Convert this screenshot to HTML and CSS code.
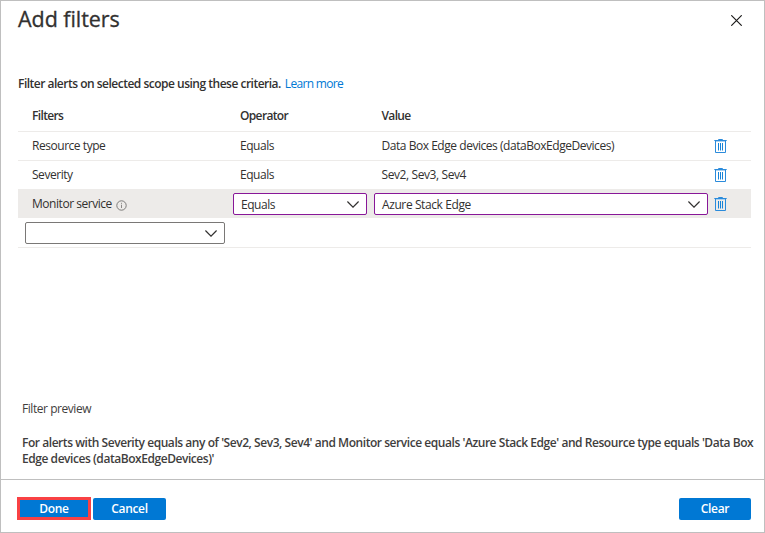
FILE: index.html
```html
<!DOCTYPE html>
<html lang="en">
<head>
<meta charset="utf-8">
<title>Add filters</title>
<link rel="stylesheet" href="styles.css">
</head>
<body>
<svg class="defs" width="0" height="0" aria-hidden="true">
  <symbol id="trash" viewBox="0 0 13 14">
    <path d="M.3 1.5H12.7M4.5 1.5V.5H8.5V1.5" fill="none" stroke="#2b8bdb"/>
    <path d="M1.5 2V13.5H11.5V2" fill="none" stroke="#2b8bdb"/><path d="M2 2.5H11" stroke="#a8d0f1"/>
    <path d="M4.5 4V11.5M6.5 4V11.5M8.5 4V11.5" fill="none" stroke="#1683d8"/>
  </symbol>
  <symbol id="chevron" viewBox="0 0 12 7">
    <path d="M.4.5 6 6.1 11.6.5" fill="none" stroke="#323130" stroke-width="1.2"/>
  </symbol>
</svg>
<main class="dialog">
  <header class="head">
    <h1>Add filters</h1>
    <svg class="close" viewBox="0 0 11 11"><path d="M.3.3 10.7 10.7M10.7.3.3 10.7" stroke="#1b1a19" stroke-width="1.15"/></svg>
  </header>
  <p class="lead"><span>Filter alerts on selected scope using these criteria.</span><a class="more">Learn more</a></p>
  <section class="table">
    <div class="row titles"><span>Filters</span><span>Operator</span><span>Value</span></div>
    <div class="row"><span>Resource type</span><span>Equals</span><span>Data Box Edge devices (dataBoxEdgeDevices)</span><svg class="trash"><use href="#trash"/></svg></div>
    <div class="row"><span>Severity</span><span>Equals</span><span class="levels">Sev2, Sev3, Sev4</span><svg class="trash"><use href="#trash"/></svg></div>
    <div class="row active">
      <div class="service"><span>Monitor service</span><svg class="info" viewBox="0 0 11 11"><circle cx="5.5" cy="5.5" r="4.7" fill="none" stroke="#706f6e" stroke-width=".9"/><path d="M5.5 4.7V8M5.5 2.8V3.8" stroke="#8a8886"/></svg></div>
      <div class="select"><span>Equals</span><svg class="chevron"><use href="#chevron"/></svg></div>
      <div class="select value"><span>Azure Stack Edge</span><svg class="chevron"><use href="#chevron"/></svg></div>
      <svg class="trash"><use href="#trash"/></svg>
    </div>
    <div class="row blank"><div class="select empty"><svg class="chevron"><use href="#chevron"/></svg></div></div>
  </section>
  <section class="preview">
    <h2>Filter preview</h2>
    <p>For alerts with Severity equals any of 'Sev2, Sev3, Sev4' and Monitor service equals 'Azure Stack Edge' and Resource type equals 'Data Box<br>Edge devices (dataBoxEdgeDevices)'</p>
  </section>
  <footer class="foot">
    <button class="done">Done</button><button>Cancel</button><button class="clear">Clear</button>
  </footer>
</main>
</body>
</html>
```
FILE: styles.css
```css
* { box-sizing: border-box; }
body { margin: 0; background: #fff; color: #323130; font: 12px/16px "Open Sans", "Noto Sans", sans-serif; }
.defs { position: absolute; }
.dialog { width: 765px; height: 533px; border: 1px solid #bfbfbf; display: flex; flex-direction: column; overflow: hidden; white-space: nowrap; }
h1, h2, p { margin: 0; font-weight: 400; }
.head { height: 75px; padding: 3px 22px 0 17px; display: flex; justify-content: space-between; align-items: flex-start; }
h1 { font-size: 21.5px; line-height: 30px; letter-spacing: -.05px; -webkit-text-stroke: .3px; }
.close { width: 11px; height: 11px; margin-top: 11px; }
.lead { height: 25px; padding: 0 0 0 17px; font-weight: 600; display: flex; gap: 4px; letter-spacing: -.5px; }
.more { color: #0078d4; font-weight: 400; letter-spacing: -.68px; }
.table { margin: 0 13px 0 17px; letter-spacing: -.46px; }
.row { display: grid; grid-template-columns: 208px 141.5px 332.5px 13px; align-items: center; height: 29px; padding-left: 14px; border-top: 1px solid #edebe9; }
.titles { height: 30px; border: 0; font-weight: 600; letter-spacing: -.65px; }
.levels { letter-spacing: -.4px; }
.active { background: #edebe9; grid-template-columns: 201px 134px 341px 19px; }
.active .value { margin-left: 7px; width: 334px; letter-spacing: -.4px; }
.active .trash { margin-left: 6px; }
.trash { width: 13px; height: 14px; display: block; }
.service { display: flex; align-items: center; gap: 4px; }
.info { width: 11px; height: 11px; margin-top: 2px; }
.select { height: 22px; width: 134px; border: 1px solid #881798; border-radius: 2px; background: #fff; display: flex; align-items: center; padding: 1px 7px 0; }
.chevron { width: 12px; height: 7px; margin-left: auto; }
.blank { height: 30px; padding-left: 7px; border: 0; border-bottom: 1px solid #edebe9; }
.select.empty { width: 200px; border-color: #7a7876; }
.preview { margin-top: auto; padding-left: 21px; color: #3f3e3d; height: 78px; letter-spacing: -.45px; }
h2 { font-size: 12px; line-height: 16px; margin-bottom: 18px; }
.preview p { font-weight: 600; letter-spacing: -.447px; }
.foot { height: 53px; border-top: 1px solid #bfbfbf; padding: 18px 13px 0 16px; display: flex; align-items: flex-start; }
button { width: 73px; height: 22px; border: 0; border-radius: 2px; background: #0078d4; color: #fff; font: 600 12px/20px "Open Sans", sans-serif; padding: 0; letter-spacing: -.35px; }
.done { width: 74px; height: 23px; margin: -1px 2px 0 0; border: 3px solid #f94144; border-radius: 0; line-height: 17px; }
.clear { width: 72px; margin-left: auto; }
```
